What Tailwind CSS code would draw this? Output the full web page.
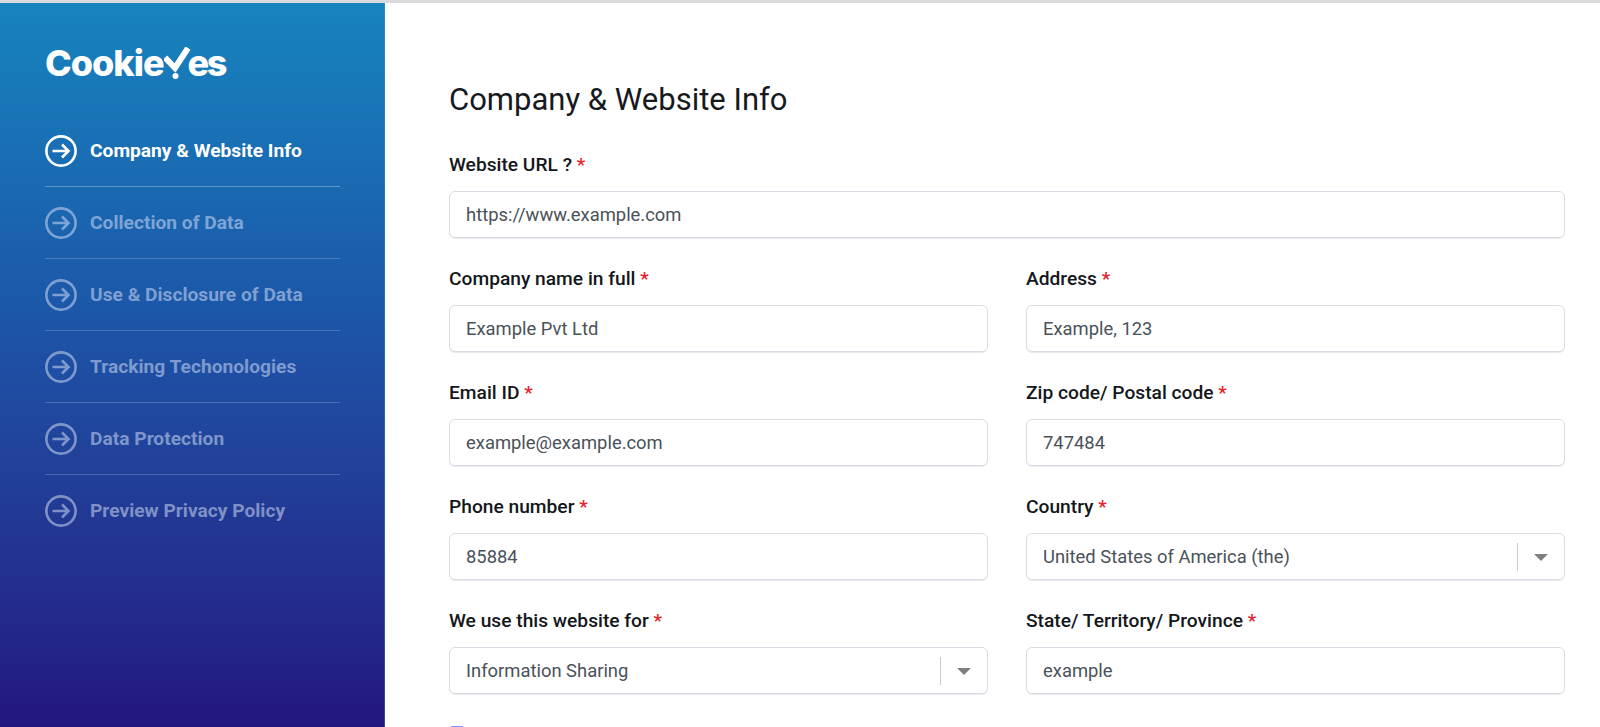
<!DOCTYPE html>
<html lang="en">
<head>
  <meta charset="UTF-8">
  <title>Company & Website Info</title>
  <script src="https://cdn.jsdelivr.net/npm/@tailwindcss/browser@4"></script>
</head>
<body class="bg-white font-['Roboto',sans-serif] overflow-hidden">
  <div class="h-[727px] flex flex-col overflow-hidden">
    <div class="h-[3px] bg-[#d9dadc] shrink-0"></div>
    <div class="flex grow min-h-0">
      <!-- sidebar -->
      <aside class="w-[385px] shrink-0 bg-gradient-to-b from-[#1784be] via-[#1c54a7] via-45% to-[#23157f] border-r border-[#3f97cf]/40 pl-[45px] pr-[44px] pt-[40px]">
        <div class="flex items-end h-[40px] text-white text-[36px] font-extrabold leading-[40px] font-['Inter',sans-serif] tracking-[-1px]">
          <span>Cookie</span>
          <svg class="w-[27px] h-[33px] mb-[3px] -mr-[3px] shrink-0" viewBox="0 0 27 33" fill="none">
            <path d="M1 10.5 L11 21 L24 1" stroke="white" stroke-width="6"/>
            <circle cx="11.5" cy="29" r="3" fill="white"/>
          </svg>
          <span class="tracking-[-2.5px]">es</span>
        </div>
        <ul class="mt-[32px]">
          <li class="flex items-center gap-[13px] h-[72px] border-b border-white/30 text-white">
            <svg class="w-8 h-8 shrink-0" viewBox="0 0 32 32" fill="none" stroke="currentColor" stroke-width="2.6"><circle cx="16" cy="16" r="14.6"/><path d="M7.5 16h16M17 9.5l6.5 6.5-6.5 6.5"/></svg>
            <span class="text-[19.2px] font-bold pt-px">Company &amp; Website Info</span>
          </li>
          <li class="flex items-center gap-[13px] h-[72px] border-b border-white/20 text-[#7fa5d6]">
            <svg class="w-8 h-8 shrink-0" viewBox="0 0 32 32" fill="none" stroke="currentColor" stroke-width="2.6"><circle cx="16" cy="16" r="14.6"/><path d="M7.5 16h16M17 9.5l6.5 6.5-6.5 6.5"/></svg>
            <span class="text-[19.2px] font-bold pt-px">Collection of Data</span>
          </li>
          <li class="flex items-center gap-[13px] h-[72px] border-b border-white/20 text-[#7fa0d2]">
            <svg class="w-8 h-8 shrink-0" viewBox="0 0 32 32" fill="none" stroke="currentColor" stroke-width="2.6"><circle cx="16" cy="16" r="14.6"/><path d="M7.5 16h16M17 9.5l6.5 6.5-6.5 6.5"/></svg>
            <span class="text-[19.2px] font-bold pt-px">Use &amp; Disclosure of Data</span>
          </li>
          <li class="flex items-center gap-[13px] h-[72px] border-b border-white/20 text-[#7f9bce]">
            <svg class="w-8 h-8 shrink-0" viewBox="0 0 32 32" fill="none" stroke="currentColor" stroke-width="2.6"><circle cx="16" cy="16" r="14.6"/><path d="M7.5 16h16M17 9.5l6.5 6.5-6.5 6.5"/></svg>
            <span class="text-[19.2px] font-bold pt-px">Tracking Techonologies</span>
          </li>
          <li class="flex items-center gap-[13px] h-[72px] border-b border-white/20 text-[#7f96ca]">
            <svg class="w-8 h-8 shrink-0" viewBox="0 0 32 32" fill="none" stroke="currentColor" stroke-width="2.6"><circle cx="16" cy="16" r="14.6"/><path d="M7.5 16h16M17 9.5l6.5 6.5-6.5 6.5"/></svg>
            <span class="text-[19.2px] font-bold pt-px">Data Protection</span>
          </li>
          <li class="flex items-center gap-[13px] h-[72px] text-[#7f91c6]">
            <svg class="w-8 h-8 shrink-0" viewBox="0 0 32 32" fill="none" stroke="currentColor" stroke-width="2.6"><circle cx="16" cy="16" r="14.6"/><path d="M7.5 16h16M17 9.5l6.5 6.5-6.5 6.5"/></svg>
            <span class="text-[19.2px] font-bold pt-px">Preview Privacy Policy</span>
          </li>
        </ul>
      </aside>
      <!-- form -->
      <main class="grow pl-[64px] pr-[35px] pt-[77px]">
        <h1 class="text-[31px] leading-[40px] font-normal text-[#16191d]">Company &amp; Website Info</h1>
        <div class="mt-[33px] grid grid-cols-2 gap-x-[38px] gap-y-[29px]">
          <div class="col-span-2">
            <label class="block text-[19.2px] leading-[24px] font-medium text-[#14171a] mb-[14px]">Website URL ? <span class="text-[#e8202a]">*</span></label>
            <div class="h-[47px] border border-[#d8dde4] rounded-[6px] shadow-[0_1px_0_#e6e9ed] px-4 flex items-center text-[18.4px] text-[#4a5159]">https://www.example.com</div>
          </div>
          <div>
            <label class="block text-[19.2px] leading-[24px] font-medium text-[#14171a] mb-[14px]">Company name in full <span class="text-[#e8202a]">*</span></label>
            <div class="h-[47px] border border-[#d8dde4] rounded-[6px] shadow-[0_1px_0_#e6e9ed] px-4 flex items-center text-[18.4px] text-[#4a5159]">Example Pvt Ltd</div>
          </div>
          <div>
            <label class="block text-[19.2px] leading-[24px] font-medium text-[#14171a] mb-[14px]">Address <span class="text-[#e8202a]">*</span></label>
            <div class="h-[47px] border border-[#d8dde4] rounded-[6px] shadow-[0_1px_0_#e6e9ed] px-4 flex items-center text-[18.4px] text-[#4a5159]">Example, 123</div>
          </div>
          <div>
            <label class="block text-[19.2px] leading-[24px] font-medium text-[#14171a] mb-[14px]">Email ID <span class="text-[#e8202a]">*</span></label>
            <div class="h-[47px] border border-[#d8dde4] rounded-[6px] shadow-[0_1px_0_#e6e9ed] px-4 flex items-center text-[18.4px] text-[#4a5159]">example@example.com</div>
          </div>
          <div>
            <label class="block text-[19.2px] leading-[24px] font-medium text-[#14171a] mb-[14px]">Zip code/ Postal code <span class="text-[#e8202a]">*</span></label>
            <div class="h-[47px] border border-[#d8dde4] rounded-[6px] shadow-[0_1px_0_#e6e9ed] px-4 flex items-center text-[18.4px] text-[#4a5159]">747484</div>
          </div>
          <div>
            <label class="block text-[19.2px] leading-[24px] font-medium text-[#14171a] mb-[14px]">Phone number <span class="text-[#e8202a]">*</span></label>
            <div class="h-[47px] border border-[#d8dde4] rounded-[6px] shadow-[0_1px_0_#e6e9ed] px-4 flex items-center text-[18.4px] text-[#4a5159]">85884</div>
          </div>
          <div>
            <label class="block text-[19.2px] leading-[24px] font-medium text-[#14171a] mb-[14px]">Country <span class="text-[#e8202a]">*</span></label>
            <div class="h-[47px] border border-[#d8dde4] rounded-[6px] shadow-[0_1px_0_#e6e9ed] pl-4 flex items-center text-[18.4px] text-[#4a5159]">
              <span class="grow">United States of America (the)</span>
              <span class="w-px h-[28px] bg-[#c9cccf]"></span>
              <span class="w-[46px] flex justify-center"><span class="w-0 h-0 border-x-[7px] border-x-transparent border-t-[7px] border-t-[#808080] mt-[2px]"></span></span>
            </div>
          </div>
          <div>
            <label class="block text-[19.2px] leading-[24px] font-medium text-[#14171a] mb-[14px]">We use this website for <span class="text-[#e8202a]">*</span></label>
            <div class="h-[47px] border border-[#d8dde4] rounded-[6px] shadow-[0_1px_0_#e6e9ed] pl-4 flex items-center text-[18.4px] text-[#4a5159]">
              <span class="grow">Information Sharing</span>
              <span class="w-px h-[28px] bg-[#c9cccf]"></span>
              <span class="w-[46px] flex justify-center"><span class="w-0 h-0 border-x-[7px] border-x-transparent border-t-[7px] border-t-[#808080] mt-[2px]"></span></span>
            </div>
          </div>
          <div>
            <label class="block text-[19.2px] leading-[24px] font-medium text-[#14171a] mb-[14px]">State/ Territory/ Province <span class="text-[#e8202a]">*</span></label>
            <div class="h-[47px] border border-[#d8dde4] rounded-[6px] shadow-[0_1px_0_#e6e9ed] px-4 flex items-center text-[18.4px] text-[#4a5159]">example</div>
          </div>
        </div>
        <div class="mt-[32px] ml-px w-[14px] h-[14px] border border-[#6f9bff] rounded-[2px]"></div>
      </main>
    </div>
  </div>
</body>
</html>
